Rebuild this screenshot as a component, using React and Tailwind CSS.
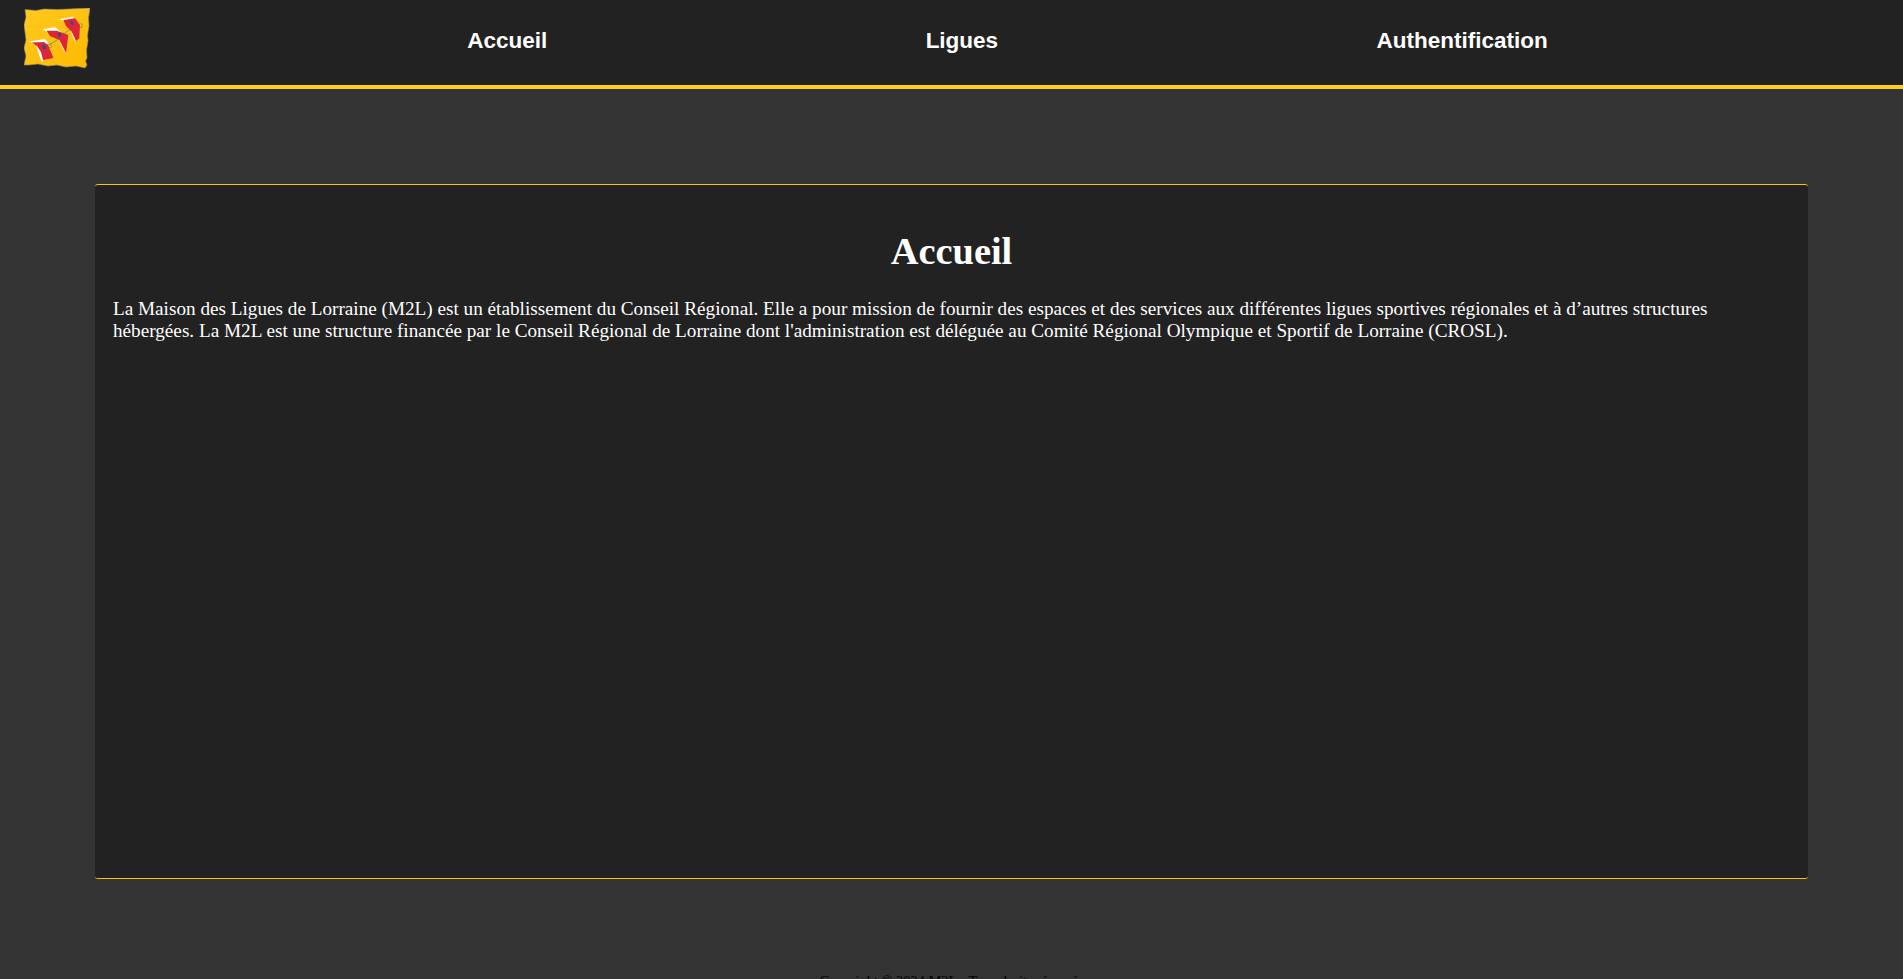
const Logo = () => (
  <svg viewBox="0 0 66 62" className="w-[66px] h-[62px] block">
    <defs>
      <linearGradient id="jaune" x1="0" y1="0" x2="1" y2="1">
        <stop offset="0" stopColor="#ffca1f" />
        <stop offset="1" stopColor="#ffb900" />
      </linearGradient>
    </defs>
    <polygon
      fill="url(#jaune)"
      stroke="#8d8a78"
      strokeWidth="0.6"
      points="1,1.5 12,2.5 20,1 33,1.5 45,1 54,0.5 66,0 64.5,10 65,18 63.5,27 64,33 62.5,42 63,50 61.5,53 63,57 61,60 52,58 42,59 33,57 24,58 14,56 5,57 0,57 2,48 0,40 2,32 1,24 0,17 2,9"
    />
    {/* tiges entre les cerfs-volants */}
    <g fill="none" stroke="#5f8a78" strokeWidth="0.8">
      <path d="M23,37 C27,36 31,34 35,30 M41,25 C44,23 47,21 50,18" />
      <path d="M36,28 C40,33 44,31 41,26 C39,24 37,26 38,28" />
      <path d="M52,17 C57,22 60,19 57,15" />
      <path d="M23,38 C27,42 29,38 26,36" />
    </g>
    <polygon fill="#fff" points="5,33.5 21,31 25,36 12,36" />
    <polygon fill="#fff" points="12,36 21,50 18,54 15,47" />
    <polygon fill="#dc2638" points="8,34.5 20,34 24,37 29.5,50 19,52 17,44 13,38" />
    <polygon fill="#2f4a8f" points="18,37 21,37 22,41 19,41" />
    <polygon fill="#fff" points="18.7,21.3 31,19.3 37,24 28,26.5" />
    <polygon fill="#fff" points="34,31 38,30 42,38 42,46" />
    <polygon fill="#dc2638" points="22.7,22.7 32.7,22.7 44.3,27 42,45 35.3,32 26,28" />
    <polygon fill="#2f4a8f" points="34,25 37,25.5 37,29 34,28" />
    <polygon fill="#fff" points="35.3,11.3 49.3,8.7 50,12 43,14" />
    <polygon fill="#fff" points="46,21 49,21 53,30 51,33.7" />
    <polygon fill="#dc2638" points="39.3,12 51,10.3 56,17 55.3,30.3 52,33 47.7,23.7 42,18" />
    <polygon fill="#2f4a8f" points="46,13.5 49,13.5 49.5,17 47,16" />
  </svg>
);

const liens = ["Accueil", "Ligues", "Authentification"];

export default function App() {
  return (
    <div className="min-h-screen bg-[#333333] font-['Liberation_Serif',serif] text-white">
      <header className="flex h-[89px] items-start border-b-4 border-[#ffcc1a] bg-[#222222]">
        <div className="w-[278px] shrink-0 pl-6 pt-2">
          <Logo />
        </div>
        <ul className="flex w-[1459px] h-[81px] items-center justify-around font-['Liberation_Sans',sans-serif] text-[22.5px] font-bold">
          {liens.map((lien) => (
            <li key={lien}>{lien}</li>
          ))}
        </ul>
      </header>

      <main className="px-[95px] pt-[95px] pb-[92px]">
        <section className="h-[695px] rounded-[3px] border-y border-[#ffc107] bg-[#222222] px-[18px]">
          <h1 className="mt-[44px] mb-[25px] text-center text-[38.4px] leading-[44px] font-bold">Accueil</h1>
          <p className="text-[19.2px] leading-[22px]">
            La Maison des Ligues de Lorraine (M2L) est un établissement du Conseil Régional. Elle a pour mission de fournir des espaces et des services aux différentes ligues sportives régionales et à d’autres structures hébergées. La M2L est une structure financée par le Conseil Régional de Lorraine dont l'administration est déléguée au Comité Régional Olympique et Sportif de Lorraine (CROSL).
          </p>
        </section>
      </main>

      <footer className="pb-4 text-center text-[14.4px] text-black">Copyright © 2024 M2L - Tous droits réservés</footer>
    </div>
  );
}
